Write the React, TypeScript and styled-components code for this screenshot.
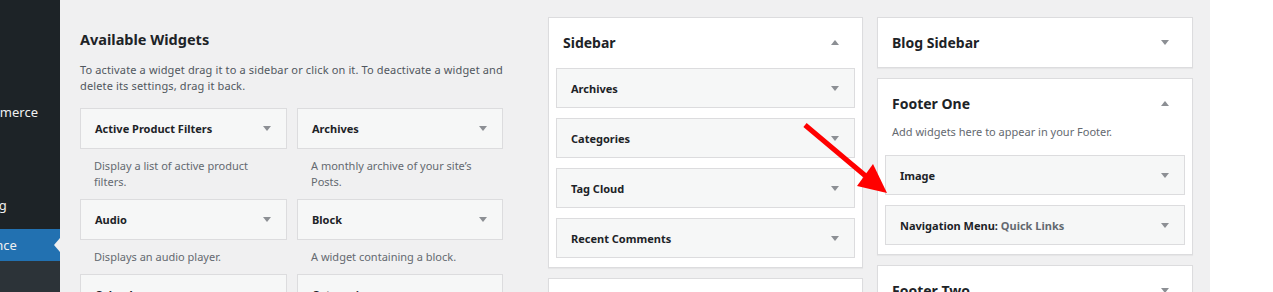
import React from 'react';
import styled, { createGlobalStyle } from 'styled-components';

const GlobalStyle = createGlobalStyle`
  body {
    margin: 0;
    background: #ffffff;
    font-family: "Noto Sans", "Open Sans", sans-serif;
    color: #1d2327;
  }
  * { box-sizing: border-box; }
`;

const Screen = styled.div`
  position: relative;
  display: flex;
  width: 1273px;
  height: 292px;
  overflow: hidden;
  background: #ffffff;
`;

const AdminMenu = styled.nav`
  width: 60px;
  flex: none;
  background: #1d2327;
  overflow: hidden;
`;

const MenuList = styled.ul`
  list-style: none;
  margin: 0 0 0 -100px;
  padding: 97px 0 0;
  width: 160px;
`;

const MenuItem = styled.li<{ $active?: boolean }>`
  position: relative;
  height: ${p => (p.$active ? 32 : 31)}px;
  line-height: ${p => (p.$active ? 32 : 31)}px;
  padding-left: 44px;
  font-size: 13px;
  color: #f0f0f1;
  white-space: nowrap;
  background: ${p => (p.$active ? '#2271b1' : 'transparent')};

  ${p =>
    p.$active &&
    `
    &::after {
      content: '';
      position: absolute;
      right: 0;
      top: 9px;
      border: 7px solid transparent;
      border-right: 6px solid #f0f0f1;
      border-left: 0;
    }
  `}
`;

const MenuSeparator = styled.li`
  height: 8px;
`;

const SubMenu = styled.li`
  height: 60px;
  background: #2c3338;
`;

const Main = styled.main`
  width: 1150px;
  flex: none;
  display: flex;
  align-items: flex-start;
  padding: 17px 17px 0 20px;
  background: #f0f0f1;
`;

const AvailableCol = styled.section`
  width: 423px;
  flex: none;
  margin-right: 45px;
`;

const SectionTitle = styled.h2`
  margin: 12px 0 0;
  font-size: 14.5px;
  line-height: 20px;
  font-weight: 700;
  color: #1d2327;
`;

const Intro = styled.p`
  margin: 13px 0 14px;
  font-size: 11px;
  line-height: 16px;
  letter-spacing: 0.14px;
  color: #50575e;
`;

const WidgetGrid = styled.div`
  display: grid;
  grid-template-columns: 207px 206px;
  column-gap: 10px;
`;

const WidgetCell = styled.div``;

const WidgetBox = styled.div<{ $h?: number }>`
  display: flex;
  align-items: center;
  justify-content: space-between;
  height: ${p => p.$h ?? 41}px;
  padding: 0 15px 0 14px;
  background: #f6f7f7;
  border: 1px solid #dcdcde;
`;

const WidgetTitle = styled.span`
  font-size: 11px;
  font-weight: 700;
  color: #1d2327;
  white-space: nowrap;
`;

const InstanceTitle = styled.span`
  color: #646970;
`;

const WidgetDesc = styled.p`
  margin: 0;
  padding: 9px 12px 9px 14px;
  font-size: 11px;
  line-height: 16px;
  color: #646970;
`;

const Caret = styled.span<{ $up?: boolean }>`
  flex: none;
  width: 0;
  height: 0;
  border-left: 4px solid transparent;
  border-right: 4px solid transparent;
  ${p =>
    p.$up
      ? 'border-bottom: 5px solid #8c8f94;'
      : 'border-top: 5px solid #8c8f94;'}
`;

const AreaCol = styled.div<{ $w: number; $gap: number }>`
  width: ${p => p.$w}px;
  flex: none;
  margin-right: ${p => p.$gap}px;
  display: flex;
  flex-direction: column;
  gap: 10px;
`;

const AreaPanel = styled.div`
  background: #ffffff;
  border: 1px solid #dcdcde;
  box-shadow: 0 1px 1px rgba(0, 0, 0, 0.04);
`;

const AreaHeader = styled.div`
  display: flex;
  align-items: center;
  justify-content: space-between;
  height: 49px;
  padding: 0 23px 0 14px;
`;

const AreaTitle = styled.h3`
  margin: 0;
  font-size: 14px;
  font-weight: 700;
  color: #1d2327;
`;

const AreaDesc = styled.p`
  margin: -4px 0 14px;
  padding: 0 14px;
  font-size: 11px;
  line-height: 16px;
  color: #646970;
`;

const AreaWidgets = styled.div`
  display: flex;
  flex-direction: column;
  gap: 10px;
  padding: 1px 7px 9px;
`;

const ArrowLayer = styled.svg`
  position: absolute;
  left: 0;
  top: 0;
  pointer-events: none;
`;

type Widget = { name: string; desc: string };

const available: Widget[] = [
  { name: 'Active Product Filters', desc: 'Display a list of active product filters.' },
  { name: 'Archives', desc: 'A monthly archive of your site\u2019s Posts.' },
  { name: 'Audio', desc: 'Displays an audio player.' },
  { name: 'Block', desc: 'A widget containing a block.' },
  { name: 'Calendar', desc: 'A calendar of your site\u2019s posts.' },
  { name: 'Categories', desc: 'A list or dropdown of categories.' },
];

const sidebarWidgets = ['Archives', 'Categories', 'Tag Cloud', 'Recent Comments'];

const menu = ['WooCommerce', 'Products', 'Analytics', 'Marketing'];

const App: React.FC = () => {
  return (
    <>
      <GlobalStyle />
      <Screen>
        <AdminMenu>
          <MenuList>
            {menu.map(m => (
              <MenuItem key={m}>{m}</MenuItem>
            ))}
            <MenuSeparator />
            <MenuItem $active>Appearance</MenuItem>
            <SubMenu />
          </MenuList>
        </AdminMenu>

        <Main>
          <AvailableCol>
            <SectionTitle>Available Widgets</SectionTitle>
            <Intro>
              To activate a widget drag it to a sidebar or click on it. To deactivate a widget and
              delete its settings, drag it back.
            </Intro>
            <WidgetGrid>
              {available.map(w => (
                <WidgetCell key={w.name}>
                  <WidgetBox>
                    <WidgetTitle>{w.name}</WidgetTitle>
                    <Caret />
                  </WidgetBox>
                  <WidgetDesc>{w.desc}</WidgetDesc>
                </WidgetCell>
              ))}
            </WidgetGrid>
          </AvailableCol>

          <AreaCol $w={315} $gap={14}>
            <AreaPanel>
              <AreaHeader>
                <AreaTitle>Sidebar</AreaTitle>
                <Caret $up />
              </AreaHeader>
              <AreaWidgets>
                {sidebarWidgets.map(w => (
                  <WidgetBox key={w} $h={40}>
                    <WidgetTitle>{w}</WidgetTitle>
                    <Caret />
                  </WidgetBox>
                ))}
              </AreaWidgets>
            </AreaPanel>
            <AreaPanel>
              <AreaHeader>
                <AreaTitle>Shop Sidebar</AreaTitle>
                <Caret />
              </AreaHeader>
            </AreaPanel>
          </AreaCol>

          <AreaCol $w={316} $gap={0}>
            <AreaPanel>
              <AreaHeader>
                <AreaTitle>Blog Sidebar</AreaTitle>
                <Caret />
              </AreaHeader>
            </AreaPanel>
            <AreaPanel>
              <AreaHeader>
                <AreaTitle>Footer One</AreaTitle>
                <Caret $up />
              </AreaHeader>
              <AreaDesc>Add widgets here to appear in your Footer.</AreaDesc>
              <AreaWidgets>
                <WidgetBox $h={40}>
                  <WidgetTitle>Image</WidgetTitle>
                  <Caret />
                </WidgetBox>
                <WidgetBox $h={40}>
                  <WidgetTitle>
                    Navigation Menu: <InstanceTitle>Quick Links</InstanceTitle>
                  </WidgetTitle>
                  <Caret />
                </WidgetBox>
              </AreaWidgets>
            </AreaPanel>
            <AreaPanel>
              <AreaHeader>
                <AreaTitle>Footer Two</AreaTitle>
                <Caret />
              </AreaHeader>
            </AreaPanel>
          </AreaCol>
        </Main>

        <ArrowLayer width="1273" height="292" viewBox="0 0 1273 292">
          <line x1="805" y1="125" x2="868" y2="178" stroke="#ff0000" strokeWidth="5" />
          <polygon points="887,193 873,164 857,186" fill="#ff0000" />
        </ArrowLayer>
      </Screen>
    </>
  );
};

export default App;
